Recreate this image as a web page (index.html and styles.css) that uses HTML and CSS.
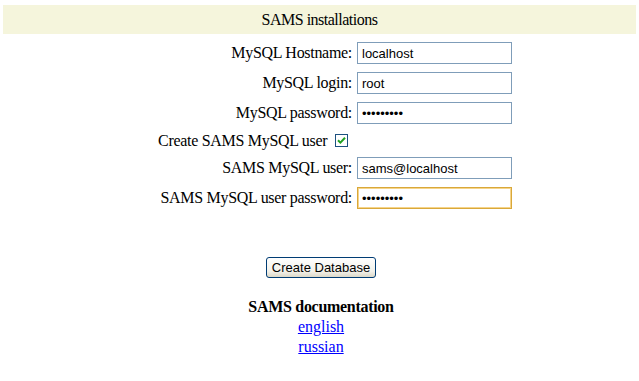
FILE: index.html
```html
<!DOCTYPE html>
<html lang="en">
<head>
    <meta charset="UTF-8">
    <title>SAMS installations</title>
    <link rel="stylesheet" href="styles.css">
</head>
<body>
    <div class="title-frame">SAMS installations</div>

    <form class="db-form">
        <label class="field-label" for="hostInput">MySQL Hostname:</label>
        <input type="text" id="hostInput" value="localhost">

        <label class="field-label" for="loginInput">MySQL login:</label>
        <input type="text" id="loginInput" value="root">

        <label class="field-label" for="passInput">MySQL password:</label>
        <input type="password" id="passInput" value="123456789">

        <div class="check-row">
            Create SAMS MySQL user
            <span class="checkbox">
                <svg width="9" height="9" viewBox="0 0 9 9">
                    <path d="M1 4.2 L3.4 6.6 L8 1.8" fill="none" stroke="#21a121" stroke-width="2"/>
                </svg>
            </span>
        </div>
        <div></div>

        <label class="field-label" for="userInput">SAMS MySQL user:</label>
        <input type="text" id="userInput" value="sams@localhost">

        <label class="field-label" for="userPassInput">SAMS MySQL user password:</label>
        <input type="password" id="userPassInput" class="focused" value="123456789">
    </form>

    <div class="actions">
        <button type="button">Create Database</button>
    </div>

    <div class="docs">
        <div class="docs-title">SAMS documentation</div>
        <a href="#">english</a><br>
        <a href="#">russian</a>
    </div>
</body>
</html>
```

FILE: styles.css
```css
body {
    font-family: "Liberation Serif", "Times New Roman", serif;
    font-size: 16px;
    color: black;
    background-color: white;
    margin: 0;
    padding: 5px 3px;
}
.title-frame {
    background-color: #f5f5dc;
    height: 29px;
    line-height: 29px;
    text-align: center;
    letter-spacing: -0.5px;
}
.db-form {
    display: grid;
    grid-template-columns: 1fr 155px;
    column-gap: 5px;
    row-gap: 8px;
    align-items: center;
    margin-top: 8px;
    padding-right: 124px;
}
.field-label {
    text-align: right;
    white-space: nowrap;
    letter-spacing: -0.3px;
}
input[type="text"], input[type="password"] {
    height: 22px;
    padding: 0 4px;
    font-family: "Liberation Sans", Arial, sans-serif;
    font-size: 13px;
    border: 1px solid #7f9db9;
    background-color: white;
    color: black;
    box-sizing: border-box;
    outline: none;
}
input.focused {
    border: 1px solid #d9a83a;
    box-shadow: inset 0 0 0 1px #f6d48a;
}
.check-row {
    height: 17px;
    line-height: 17px;
    text-align: right;
    white-space: nowrap;
    letter-spacing: -0.3px;
}
.checkbox {
    display: inline-block;
    width: 13px;
    height: 13px;
    margin: 0 4px 0 4px;
    border: 1px solid #1c5180;
    background-color: white;
    box-sizing: border-box;
    vertical-align: -1px;
    position: relative;
}
.checkbox svg {
    position: absolute;
    left: 1px;
    top: 1px;
}
.actions {
    text-align: center;
    margin-top: 48px;
    padding-left: 3px;
}
button {
    width: 110px;
    height: 21px;
    padding: 0;
    font-family: "Liberation Sans", Tahoma, sans-serif;
    font-size: 13px;
    color: black;
    border: 1px solid #003c74;
    border-radius: 3px;
    background: linear-gradient(#ffffff, #f2f1ea 70%, #dcd8c8);
    cursor: pointer;
}
.docs {
    text-align: center;
    margin-top: 19px;
    line-height: 20px;
    padding-left: 3px;
}
.docs-title {
    font-weight: bold;
    letter-spacing: -0.3px;
}
.docs a {
    color: #0000ff;
}
```
